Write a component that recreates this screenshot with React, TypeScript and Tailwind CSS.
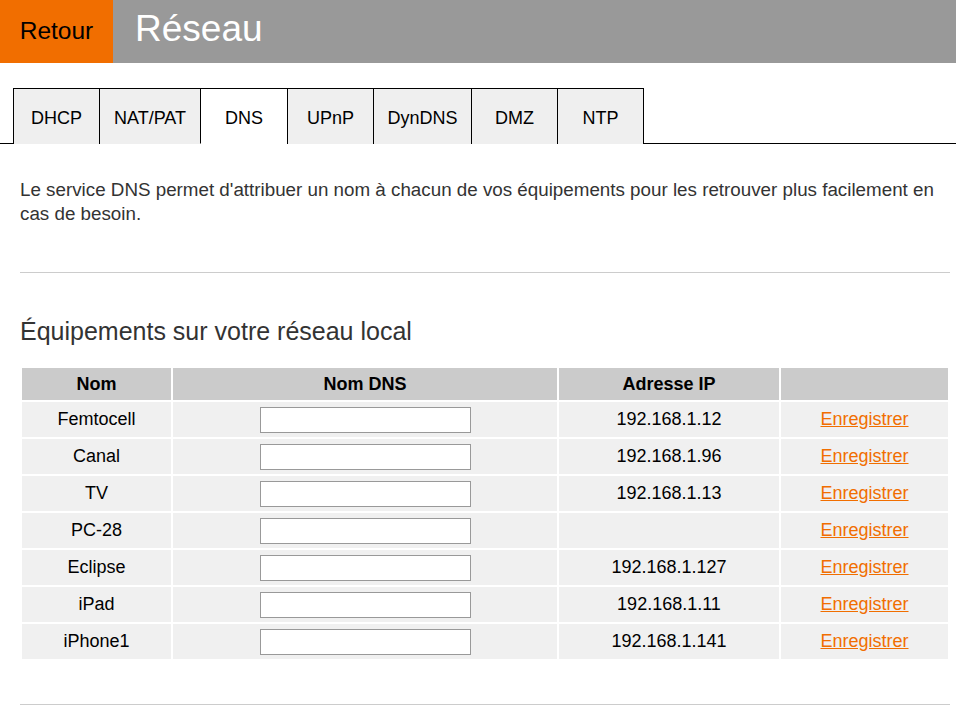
import React from "react";

const tabs = [
  { label: "DHCP", w: "w-[86px]" },
  { label: "NAT/PAT", w: "w-[101px]" },
  { label: "DNS", w: "w-[87px]" },
  { label: "UPnP", w: "w-[86px]" },
  { label: "DynDNS", w: "w-[98px]" },
  { label: "DMZ", w: "w-[86px]" },
  { label: "NTP", w: "w-[87px]" },
];

const devices = [
  { name: "Femtocell", ip: "192.168.1.12" },
  { name: "Canal", ip: "192.168.1.96" },
  { name: "TV", ip: "192.168.1.13" },
  { name: "PC-28", ip: "" },
  { name: "Eclipse", ip: "192.168.1.127" },
  { name: "iPad", ip: "192.168.1.11" },
  { name: "iPhone1", ip: "192.168.1.141" },
];

export default function App() {
  return (
    <div className="min-h-[706px] bg-white font-['Liberation_Sans',Arial,sans-serif] text-black">
      {/* header */}
      <div className="flex h-[63px] bg-[#999999]">
        <a className="flex w-[113px] items-center justify-center bg-[#f16e00] text-[24.5px] text-black">
          Retour
        </a>
        <h1 className="flex items-center pl-[22px] pb-[6px] text-[37px] text-white">Réseau</h1>
      </div>

      {/* tabs */}
      <div className="mt-[25px] flex border-b border-black pl-[13px]">
        {tabs.map((t, i) => {
          const active = t.label === "DNS";
          return (
            <div
              key={t.label}
              className={`${t.w} -mb-px flex h-[56px] items-center justify-center border-t border-l border-black pt-[4px] text-[18px] ${
                i === tabs.length - 1 ? "border-r" : ""
              } ${active ? "border-b border-b-white bg-white" : "bg-[#efefef]"}`}
            >
              {t.label}
            </div>
          );
        })}
      </div>

      <div className="pl-[20px] pr-[6px]">
        <p className="mt-[34px] pr-[10px] text-[18.8px] leading-[24px] text-[#333333]">
          Le service DNS permet d'attribuer un nom à chacun de vos équipements pour les retrouver plus facilement en
          cas de besoin.
        </p>

        <hr className="mt-[46px] border-[#cccccc]" />

        <h2 className="mt-[42px] text-[25px] leading-[32px] text-[#333333]">Équipements sur votre réseau local</h2>

        <table className="mt-[19px] w-[930px] table-fixed border-separate border-spacing-[2px] text-[18px]">
          <colgroup>
            <col className="w-[149px]" />
            <col className="w-[384px]" />
            <col className="w-[220px]" />
            <col className="w-[167px]" />
          </colgroup>
          <thead>
            <tr className="h-[32px] bg-[#cbcbcb] font-bold">
              <th className="font-bold">Nom</th>
              <th className="font-bold">Nom DNS</th>
              <th className="font-bold">Adresse IP</th>
              <th></th>
            </tr>
          </thead>
          <tbody>
            {devices.map((d) => (
              <tr key={d.name} className="h-[35px] bg-[#f0f0f0] text-center">
                <td>{d.name}</td>
                <td>
                  <input
                    type="text"
                    className="h-[26px] w-[211px] border border-[#999999] bg-white align-middle"
                  />
                </td>
                <td>{d.ip}</td>
                <td>
                  <a className="cursor-pointer text-[#f16e00] underline">Enregistrer</a>
                </td>
              </tr>
            ))}
          </tbody>
        </table>

        <hr className="mt-[43px] border-[#cccccc]" />
      </div>
    </div>
  );
}
